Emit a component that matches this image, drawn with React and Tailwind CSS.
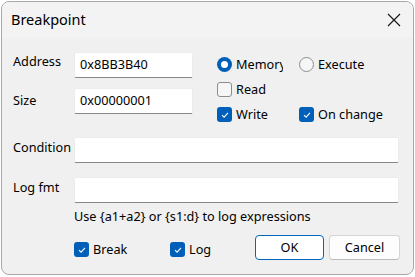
import React from "react";

const FONT = { fontFamily: '"Noto Sans", "Open Sans", sans-serif' };

function Check({ checked }) {
  if (!checked) {
    return <span className="w-[15px] h-[15px] rounded-[3px] border border-[#8d8d8d] bg-[#f6f6f6] shrink-0" />;
  }
  return (
    <span className="w-[15px] h-[15px] rounded-[3px] bg-[#005fb8] flex items-center justify-center shrink-0">
      <svg width="10" height="10" viewBox="0 0 10 10">
        <path d="M2 5.2 L4.1 7.2 L8 2.9" fill="none" stroke="#fff" strokeWidth="1.1" />
      </svg>
    </span>
  );
}

function Radio({ checked }) {
  if (!checked) {
    return <span className="w-[15px] h-[15px] rounded-full border border-[#8d8d8d] bg-[#f6f6f6] shrink-0" />;
  }
  return (
    <span className="w-[15px] h-[15px] rounded-full bg-[#005fb8] flex items-center justify-center shrink-0">
      <span className="w-[7px] h-[7px] rounded-full bg-white" />
    </span>
  );
}

function Field({ value, width }) {
  return (
    <div
      className={`${width} h-[26px] bg-white border border-[#ececec] border-b-[#868686] rounded-[2px] flex items-center pl-[5px] text-[12.7px] text-black`}
    >
      {value}
    </div>
  );
}

function Option({ control, label, width }) {
  return (
    <div className={`${width} flex items-center gap-[4px]`}>
      {control}
      <span className="text-[12.7px] text-black">{label}</span>
    </div>
  );
}

export default function App() {
  return (
    <div className="w-[415px] h-[277px] bg-white overflow-hidden" style={FONT}>
      <div className="ml-[1px] mt-[1px] w-[413px] h-[274px] rounded-[8px] border border-[#a8a8a8] bg-[#f0f0f0] overflow-hidden">
        <div className="h-[36px] bg-[#f3f3f3] flex items-center justify-between pl-[9px] pr-[12px]">
          <span className="text-[14.5px] text-black">Breakpoint</span>
          <svg width="14" height="14" viewBox="0 0 14 14">
            <path d="M1 1 L13 13 M13 1 L1 13" stroke="#1a1a1a" strokeWidth="1.2" />
          </svg>
        </div>

        <div className="pl-[11px] pr-[13px] pt-[14px]">
          <div className="flex">
            <div className="flex flex-col gap-[10px]">
              <div className="flex items-center">
                <span className="w-[61px] text-[12.7px] text-black -mt-[6px]">Address</span>
                <Field value="0x8BB3B40" width="w-[119px]" />
              </div>
              <div className="flex items-center">
                <span className="w-[61px] text-[12.7px] text-black">Size</span>
                <Field value="0x00000001" width="w-[119px]" />
              </div>
            </div>
            <div className="ml-[24px] flex flex-col">
              <div className="h-[25px] flex">
                <div className="w-[82px] flex items-center gap-[4px]">
                  <Radio checked />
                  <span className="text-[12.7px] text-black w-[47px] overflow-hidden whitespace-nowrap">Memory</span>
                </div>
                <Option control={<Radio />} label="Execute" width="" />
              </div>
              <div className="h-[25px] flex">
                <Option control={<Check />} label="Read" width="w-[82px]" />
              </div>
              <div className="h-[25px] flex">
                <Option control={<Check checked />} label="Write" width="w-[82px]" />
                <Option control={<Check checked />} label="On change" width="" />
              </div>
            </div>
          </div>

          <div className="mt-[10px] flex items-center">
            <span className="w-[61px] text-[12.7px] text-black -mt-[4px]">Condition</span>
            <Field value="" width="w-[325px]" />
          </div>
          <div className="mt-[14px] flex items-center">
            <span className="w-[61px] text-[12.7px] text-black -mt-[4px]">Log fmt</span>
            <Field value="" width="w-[325px]" />
          </div>
          <div className="pl-[61px] mt-[4px] text-[12.7px] text-black leading-[18px]">
            Use {"{a1+a2}"} or {"{s1:d}"} to log expressions
          </div>

          <div className="mt-[10px] flex items-center">
            <div className="pl-[61px] flex items-center pt-[5px]">
              <Option control={<Check checked />} label="Break" width="w-[96px]" />
              <Option control={<Check checked />} label="Log" width="w-[85px]" />
            </div>
            <div className="flex gap-[5px]">
              <button className="w-[69px] h-[25px] bg-white border border-[#0067c0] rounded-[4px] text-[12.7px] text-black">
                OK
              </button>
              <button className="w-[71px] h-[25px] bg-[#fdfdfd] border border-[#d5d5d5] border-b-[#bcbcbc] rounded-[4px] text-[12.7px] text-black">
                Cancel
              </button>
            </div>
          </div>
        </div>
      </div>
    </div>
  );
}
